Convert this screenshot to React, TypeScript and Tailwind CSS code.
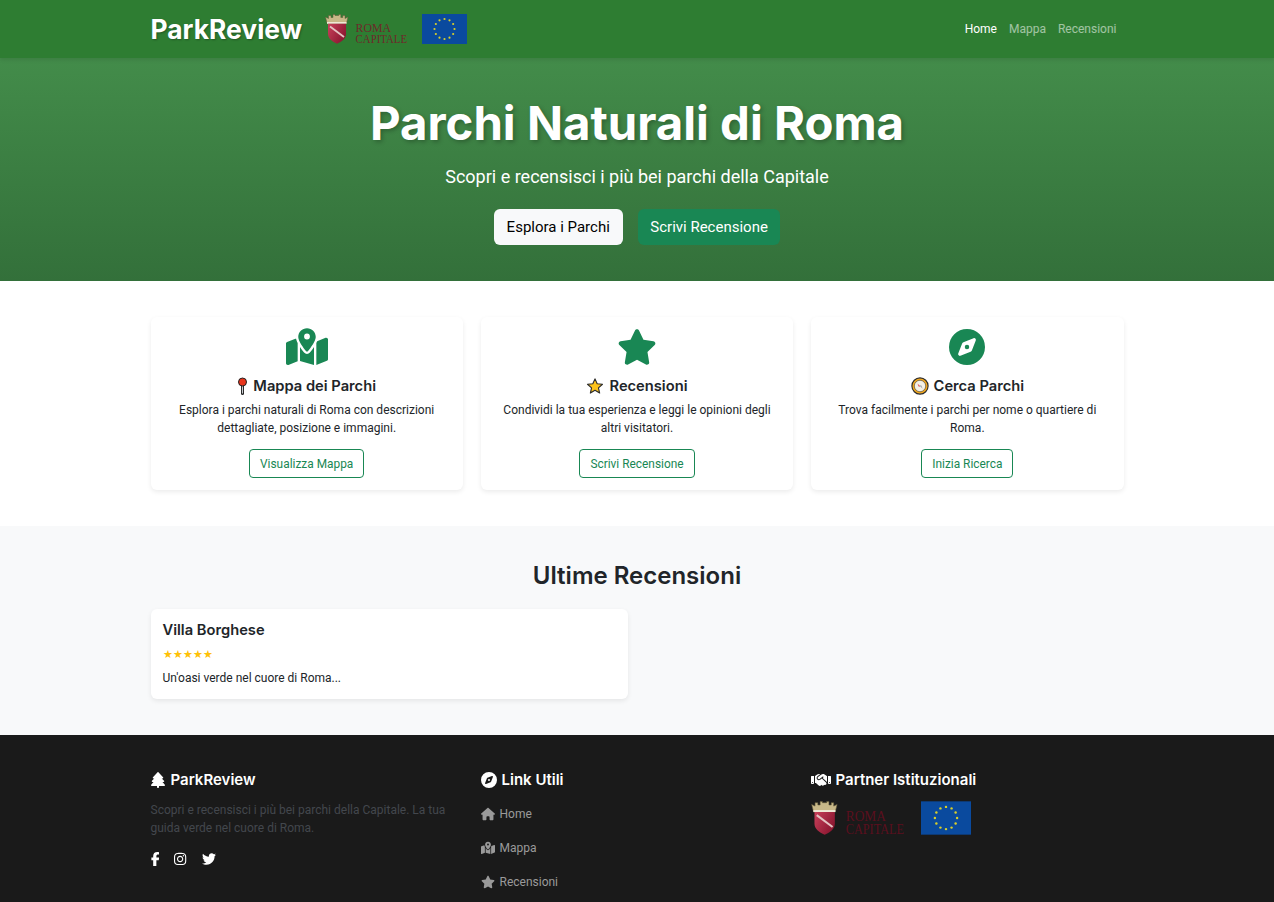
import React from 'react';
import { FaMapLocationDot, FaStar, FaCompass, FaTree, FaHandshake, FaHouse, FaFacebookF, FaInstagram, FaTwitter } from 'react-icons/fa6';

const PinEmoji = () => (
  <svg width="11" height="18" viewBox="0 0 11 18" className="shrink-0">
    <path d="M5.5 9v7.500" stroke="#222" strokeWidth="3" strokeLinecap="round" />
    <path d="M5.5 9v7" stroke="#c9ccd0" strokeWidth="1.1" strokeLinecap="round" />
    <circle cx="5.5" cy="5" r="4" fill="#e8351c" stroke="#222" strokeWidth="1" />
  </svg>
);

const StarEmoji = () => (
  <svg width="18" height="18" viewBox="0 0 24 24" className="shrink-0">
    <path d="M12 2.500l2.900 6.500 7.100.7-5.400 4.700 1.600 7-6.200-3.700-6.200 3.700 1.600-7-5.400-4.700 7.100-.7z" fill="#fcc21b" stroke="#2b2b2b" strokeWidth="1.500" strokeLinejoin="round" />
  </svg>
);

const CompassEmoji = () => (
  <svg width="18" height="18" viewBox="0 0 24 24" className="shrink-0">
    <circle cx="12" cy="12" r="10.800" fill="#f2a81d" stroke="#2b2b2b" strokeWidth="1.500" />
    <circle cx="12" cy="12" r="7.600" fill="#f4f1e6" stroke="#2b2b2b" strokeWidth="0.700" />
    <path d="M12 12l-3.500-3.500 2.200 4.800z" fill="#d8343f" />
    <path d="M12 12l3.500 3.500-2.200-4.800z" fill="#8b95a0" />
  </svg>
);

function RomaLogo({ width, height, textColor, className }: { width: number; height: number; textColor: string; className: string }) {
  const id = `shield-${width}`;
  return (
    <svg width={width} height={height} viewBox="0 0 94 34" className={className}>
      <defs>
        <linearGradient id={id} x1="0" y1="0" x2="1" y2="0.6">
          <stop offset="0" stopColor="#c8405a" />
          <stop offset="1" stopColor="#8a1630" />
        </linearGradient>
      </defs>
      <path d="M0.500 3l3 1.500V1.500h2.500v2h2v-3h2v1h3.800v-1h2v3h2v-2H20v3L23 3l-1.600 6.500H2.100z" fill="#c8b888" stroke="#5f5636" strokeWidth="0.500" />
      <rect x="2" y="8" width="19.500" height="1.800" fill="#efe9d6" />
      <path d="M3 9.800h18v10c0 4.700-4 7.700-9 10-5-2.300-9-5.300-9-10z" fill={`url(#${id})`} />
      <path d="M5 12.500l14 10.500" stroke="#e4c2c2" strokeWidth="1.800" />
      <text fontFamily="'Liberation Serif', serif" fontSize="12.500" fill={textColor}>
        <tspan x="30.600" y="18" textLength="35.500" lengthAdjust="spacingAndGlyphs">ROMA</tspan>
        <tspan x="30.600" y="29" textLength="51.500" lengthAdjust="spacingAndGlyphs">CAPITALE</tspan>
      </text>
    </svg>
  );
}

function EuFlag({ width, height }: { width: number; height: number }) {
  const stars = Array.from({ length: 12 }, (_, i) => {
    const a = (i * Math.PI) / 6;
    return { x: 22.5 + 10 * Math.sin(a), y: 15 - 10 * Math.cos(a) };
  });
  return (
    <svg width={width} height={height} viewBox="0 0 45 30" className="shrink-0">
      <rect width="45" height="30" fill="#0a4a9e" />
      {stars.map((s, i) => (
        <circle key={i} cx={s.x} cy={s.y} r="1.100" fill="#d9cf2a" />
      ))}
    </svg>
  );
}

const features = [
  {
    icon: <FaMapLocationDot className="text-[42px] text-[#198754]" />,
    emoji: <PinEmoji />,
    title: 'Mappa dei Parchi',
    text: 'Esplora i parchi naturali di Roma con descrizioni dettagliate, posizione e immagini.',
    action: 'Visualizza Mappa',
  },
  {
    icon: <FaStar className="text-[40px] text-[#198754]" />,
    emoji: <StarEmoji />,
    title: 'Recensioni',
    text: 'Condividi la tua esperienza e leggi le opinioni degli altri visitatori.',
    action: 'Scrivi Recensione',
  },
  {
    icon: <FaCompass className="text-[36px] text-[#198754]" />,
    emoji: <CompassEmoji />,
    title: 'Cerca Parchi',
    text: 'Trova facilmente i parchi per nome o quartiere di Roma.',
    action: 'Inizia Ricerca',
  },
];

const footerLinks = [
  { icon: <FaHouse className="text-[14px]" />, label: 'Home' },
  { icon: <FaMapLocationDot className="text-[14px]" />, label: 'Mappa' },
  { icon: <FaStar className="text-[14px]" />, label: 'Recensioni' },
];

export default function App() {
  return (
    <div className="font-['Roboto',sans-serif] text-[#212529] text-[12px] leading-[18px] bg-white">
      <nav className="h-[58px] bg-[#2e7d32] shadow-[0_2px_4px_rgba(0,0,0,0.1)] relative z-10">
        <div className="w-[973px] mx-auto h-full flex items-center justify-between">
          <div className="flex items-center">
            <span className="font-['Inter',sans-serif] font-bold text-[26.4px] leading-[36px] text-white [text-shadow:1px_1px_2px_rgba(0,0,0,0.3)]">ParkReview</span>
            <div className="flex items-center ml-[23px] gap-[15px]">
              <RomaLogo width={94} height={34} textColor="#6d2a2a" className="shrink-0 -mb-[4px] -mr-[12px]" />
              <EuFlag width={45} height={30} />
            </div>
          </div>
          <div className="flex items-center gap-[12px] pr-[7px]">
            <a className="text-white">Home</a>
            <a className="text-white/55">Mappa</a>
            <a className="text-white/55">Recensioni</a>
          </div>
        </div>
      </nav>

      <section className="h-[223px] bg-gradient-to-b from-[#438c4a] to-[#33703a] flex flex-col items-center pt-[36px]">
        <h1 className="font-['Inter',sans-serif] font-bold text-[47.3px] leading-[58px] text-white [text-shadow:2px_2px_4px_rgba(0,0,0,0.25)]">Parchi Naturali di Roma</h1>
        <p className="text-[18px] leading-[27px] text-white mt-[11px]">Scopri e recensisci i più bei parchi della Capitale</p>
        <div className="flex gap-[15px] mt-[19px]">
          <a className="h-[36px] px-[13px] flex items-center rounded-[6px] bg-[#f8f9fa] text-[15px] text-black">Esplora i Parchi</a>
          <a className="h-[36px] px-[12.5px] flex items-center rounded-[6px] bg-[#198754] text-[15px] text-white">Scrivi Recensione</a>
        </div>
      </section>

      <section className="py-[36px]">
        <div className="w-[973px] mx-auto grid grid-cols-3 gap-[18px]">
          {features.map((f) => (
            <div key={f.title} className="h-[173px] rounded-[6px] bg-white shadow-[0_2px_5px_rgba(0,0,0,0.08)] flex flex-col items-center pt-[12px] px-[12px]">
              <div className="h-[36px] flex items-center">{f.icon}</div>
              <h3 className="flex items-center gap-[5px] mt-[11px] h-[20px] font-['Inter',sans-serif] font-semibold text-[14.7px] leading-[20px] text-[#212529]">
                {f.emoji}
                {f.title}
              </h3>
              <p className="text-center mt-[5px] h-[36px] w-[270px]">{f.text}</p>
              <a className="mt-[12px] h-[29px] px-[10px] flex items-center rounded-[4px] border border-[#198754] text-[#198754] text-[11.9px]">{f.action}</a>
            </div>
          ))}
        </div>
      </section>

      <section className="bg-[#f8f9fa] h-[209px] pt-[32px]">
        <div className="w-[973px] mx-auto">
          <h2 className="text-center font-['Inter',sans-serif] font-semibold text-[24px] leading-[36px] text-[#212529]">Ultime Recensioni</h2>
          <div className="mt-[15px] w-[477px] h-[90px] rounded-[6px] bg-white shadow-[0_2px_5px_rgba(0,0,0,0.08)] px-[12px] pt-[12px]">
            <h5 className="font-['Inter',sans-serif] font-semibold text-[14.7px] leading-[18px] text-[#212529]">Villa Borghese</h5>
            <div className="text-[#ffc107] text-[10.8px] leading-[14px] mt-[9px]">★★★★★</div>
            <p className="mt-[7px]">Un'oasi verde nel cuore di Roma...</p>
          </div>
        </div>
      </section>

      <footer className="bg-[#1a1a1a] h-[167px] overflow-hidden pt-[34px]">
        <div className="w-[973px] mx-auto grid grid-cols-3 gap-[17px]">
          <div>
            <h5 className="flex items-center gap-[6px] font-['Inter',sans-serif] font-semibold text-[15px] leading-[21px] text-white">
              <FaTree className="w-[14px] h-[16px]" />
              ParkReview
            </h5>
            <p className="mt-[11px] text-[#43474d]">Scopri e recensisci i più bei parchi della Capitale. La tua guida verde nel cuore di Roma.</p>
            <div className="flex items-center mt-[15px] text-white">
              <FaFacebookF className="w-[8.75px] h-[14px]" />
              <FaInstagram className="w-[12.25px] h-[14px] ml-[15px]" />
              <FaTwitter className="w-[14px] h-[14px] ml-[15px]" />
            </div>
          </div>
          <div>
            <h5 className="flex items-center gap-[5px] font-['Inter',sans-serif] font-semibold text-[15px] leading-[21px] text-white">
              <FaCompass className="text-[16px]" />
              Link Utili
            </h5>
            <ul className="mt-[15px] flex flex-col gap-[16px] text-[#9a9a9a]">
              {footerLinks.map((l) => (
                <li key={l.label} className="flex items-center gap-[5px]">
                  {l.icon}
                  {l.label}
                </li>
              ))}
            </ul>
          </div>
          <div>
            <h5 className="flex items-center gap-[5px] font-['Inter',sans-serif] font-semibold text-[15px] leading-[21px] text-white">
              <FaHandshake className="w-[20px] h-[16px]" />
              Partner Istituzionali
            </h5>
            <div className="flex items-start gap-[17px] mt-[11px]">
              <RomaLogo width={106.6} height={38.5} textColor="#5a0f1e" className="shrink-0 -mb-[4.5px] -mr-[13.6px]" />
              <EuFlag width={50} height={34} />
            </div>
          </div>
        </div>
      </footer>
    </div>
  );
}
